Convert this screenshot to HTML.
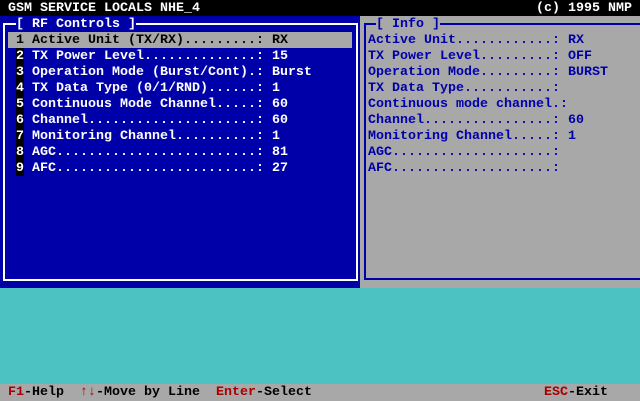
<!DOCTYPE html>
<html><head><meta charset="utf-8"><style>
*{margin:0;padding:0;box-sizing:border-box}
html{background:#a8a8a8}
body{width:640px;height:400px;overflow:hidden;background:#0000a8;position:relative;font-family:"Liberation Mono","DejaVu Sans Mono",monospace;font-size:13.33px;line-height:16px;font-weight:bold}
.a{position:absolute;white-space:pre;height:16px}
.t{padding-top:1px}
.w{color:#fff}.b{color:#0000a8}.k{color:#000}.r{color:#a80000}
</style></head><body>
<div class="a" style="left:0;top:0;width:640px;background:#000"></div>
<div class="a w t" style="left:8px;top:0">GSM SERVICE LOCALS NHE_4</div>
<div class="a w t" style="left:536px;top:0">(c) 1995 NMP</div>
<div style="position:absolute;left:3px;top:23px;width:355px;height:258px;border:2px solid #fff"></div>
<div class="a w t" style="left:16px;top:16px;background:#0000a8">[ RF Controls ]</div>
<div class="a" style="left:8px;top:32px;width:344px;background:#a8a8a8"></div>
<div class="a" style="left:16px;top:48px;width:8px;height:128px;background:#000"></div>
<div class="a k t" style="left:16px;top:32px">1 Active Unit (TX/RX).........: RX</div>
<div class="a w t" style="left:16px;top:48px">2 TX Power Level..............: 15
3 Operation Mode (Burst/Cont).: Burst
4 TX Data Type (0/1/RND)......: 1
5 Continuous Mode Channel.....: 60
6 Channel.....................: 60
7 Monitoring Channel..........: 1
8 AGC.........................: 81
9 AFC.........................: 27</div>
<div style="position:absolute;left:360px;top:16px;width:280px;height:272px;background:#a8a8a8"></div>
<div style="position:absolute;left:364px;top:23px;width:280px;height:257px;border:2px solid #0000a8;border-right:none"></div>
<div class="a b t" style="left:376px;top:16px;background:#a8a8a8">[ Info ]</div>
<div class="a b t" style="left:368px;top:32px">Active Unit............: RX
TX Power Level.........: OFF
Operation Mode.........: BURST
TX Data Type...........:
Continuous mode channel.:
Channel................: 60
Monitoring Channel.....: 1
AGC....................:
AFC....................:</div>
<div style="position:absolute;left:0;top:288px;width:640px;height:96px;background-color:#00a8a8;background-image:radial-gradient(circle at 1px 1px,#ffffff 0.7px,transparent 0.8px);background-size:2px 2px"></div>
<div style="position:absolute;left:0;top:384px;width:640px;height:17px;background:#a8a8a8"></div>
<div class="a k t" style="left:8px;top:384px"><span class="r">F1</span>-Help  <span class="r">↑↓</span>-Move by Line  <span class="r">Enter</span>-Select</div>
<div class="a k t" style="left:544px;top:384px"><span class="r">ESC</span>-Exit</div>
</body></html>
